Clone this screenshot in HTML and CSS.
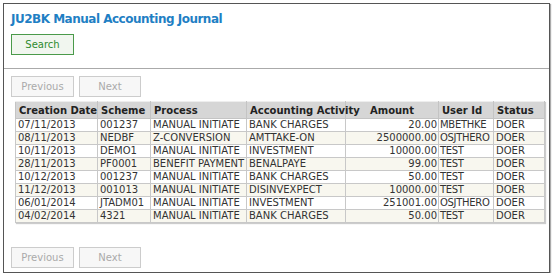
FILE: index.html
```html
<!DOCTYPE html>
<html lang="en">
<head>
<meta charset="UTF-8" />
<title>JU2BK Manual Accounting Journal</title>
<link rel="stylesheet" href="styles.css">
</head>
<body>
<div class="frame">
  <div class="top">
    <h1 class="title">JU2BK Manual Accounting Journal</h1>
    <button class="btn btn-search">Search</button>
  </div>
  <div class="pager">
    <button class="btn" disabled>Previous</button>
    <button class="btn" disabled>Next</button>
  </div>
  <table class="grid">
    <colgroup>
      <col class="c-date"><col class="c-scheme"><col class="c-process"><col class="c-act">
      <col class="c-amt"><col class="c-user"><col class="c-status">
    </colgroup>
    <thead>
      <tr>
        <th class="center">Creation Date</th>
        <th>Scheme</th>
        <th>Process</th>
        <th>Accounting Activity</th>
        <th class="center">Amount</th>
        <th>User Id</th>
        <th>Status</th>
      </tr>
    </thead>
    <tbody>
      <tr><td>07/11/2013</td><td>001237</td><td>MANUAL INITIATE</td><td>BANK CHARGES</td><td class="num">20.00</td><td class="user">MBETHKE</td><td>DOER</td></tr>
      <tr><td>08/11/2013</td><td>NEDBF</td><td>Z-CONVERSION</td><td>AMTTAKE-ON</td><td class="num">2500000.00</td><td class="user">OSJTHERO</td><td>DOER</td></tr>
      <tr><td>10/11/2013</td><td>DEMO1</td><td>MANUAL INITIATE</td><td>INVESTMENT</td><td class="num">10000.00</td><td class="user">TEST</td><td>DOER</td></tr>
      <tr><td>28/11/2013</td><td>PF0001</td><td>BENEFIT PAYMENT</td><td>BENALPAYE</td><td class="num">99.00</td><td class="user">TEST</td><td>DOER</td></tr>
      <tr><td>10/12/2013</td><td>001237</td><td>MANUAL INITIATE</td><td>BANK CHARGES</td><td class="num">50.00</td><td class="user">TEST</td><td>DOER</td></tr>
      <tr><td>11/12/2013</td><td>001013</td><td>MANUAL INITIATE</td><td>DISINVEXPECT</td><td class="num">10000.00</td><td class="user">TEST</td><td>DOER</td></tr>
      <tr><td>06/01/2014</td><td>JTADM01</td><td>MANUAL INITIATE</td><td>INVESTMENT</td><td class="num">251001.00</td><td class="user">OSJTHERO</td><td>DOER</td></tr>
      <tr><td>04/02/2014</td><td>4321</td><td>MANUAL INITIATE</td><td>BANK CHARGES</td><td class="num">50.00</td><td class="user">TEST</td><td>DOER</td></tr>
    </tbody>
  </table>
  <div class="pager pager-bottom">
    <button class="btn" disabled>Previous</button>
    <button class="btn" disabled>Next</button>
  </div>
</div>
</body>
</html>
```

FILE: styles.css
```css
body, html {
  margin: 0; padding: 0; background: #fff;
  font-family: "DejaVu Sans", Verdana, sans-serif; color: #333;
}
.frame {
  margin: 3px 0 0 3px; width: 545px; height: 268px;
  border: 1px solid #555; box-shadow: 1px 1px 1px #aaa;
  display: flex; flex-direction: column;
}
.top {
  padding: 7px 0 0 7px; border-bottom: 1px solid #aaa; height: 65px; box-sizing: border-box;
}
.title {
  margin: 0; font-size: 12px; font-weight: bold; color: #1f7fc4; letter-spacing: -0.5px;
  line-height: 16px;
}
.btn {
  display: inline-block; width: 63px; height: 21px; padding: 0; margin: 0;
  font-family: inherit; font-size: 10px; border: 1px solid #ccc;
  background: #f7f7f7; color: #aaa;
}
.btn-search {
  margin-top: 7px; border-color: #4a9a4a; background: #f1f6ef; color: #2e8b2e;
}
.pager {
  display: flex; gap: 5px; padding: 7px 0 0 7px;
}
.pager .btn + .btn { width: 62px; }
.grid {
  margin: 4px 0 0 11px; width: 530px; border-collapse: collapse; table-layout: fixed;
  font-size: 10px; border: 1px solid #c4c4c4; box-shadow: 1px 1px 1px #ccc;
}
.grid th {
  background: #d6d6d6; color: #222; font-weight: bold; text-align: left; white-space: nowrap;
  padding: 1px 3px; height: 14px; border: 1px solid #c4c4c4; border-top-color: #eee;
}
.grid th.center { text-align: center; }
.grid td {
  padding: 0 2px; height: 12px; line-height: 12px; border: 1px solid #c8c8c8; color: #333;
  white-space: nowrap; overflow: hidden;
}
.grid tbody tr:nth-child(even) td { background: #f8f7ef; }
.grid td.num { text-align: right; padding-right: 1px; }
.grid td.user { padding: 0 0 0 1px; letter-spacing: -0.3px; }
.c-date { width: 82px; }
.c-scheme { width: 53px; }
.c-process { width: 96px; }
.c-act { width: 99px; }
.c-amt { width: 93px; }
.c-user { width: 55px; }
.c-status { width: 51px; }
.pager-bottom { margin-top: auto; padding-bottom: 4px; }
```
